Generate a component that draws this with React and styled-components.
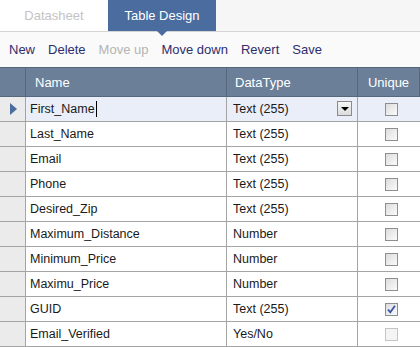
import styled, { createGlobalStyle } from 'styled-components'

const GlobalStyle = createGlobalStyle`
  html, body {
    margin: 0;
    padding: 0;
    background: #ffffff;
  }
  body {
    font-family: 'Liberation Sans', Arial, sans-serif;
  }
`

const fields = [
  { name: 'First_Name', type: 'Text (255)', selected: true },
  { name: 'Last_Name', type: 'Text (255)' },
  { name: 'Email', type: 'Text (255)' },
  { name: 'Phone', type: 'Text (255)' },
  { name: 'Desired_Zip', type: 'Text (255)' },
  { name: 'Maximum_Distance', type: 'Number' },
  { name: 'Minimum_Price', type: 'Number' },
  { name: 'Maximu_Price', type: 'Number' },
  { name: 'GUID', type: 'Text (255)', checked: true },
  { name: 'Email_Verified', type: 'Yes/No', disabled: true },
]

const actions = [
  { label: 'New' },
  { label: 'Delete' },
  { label: 'Move up', disabled: true },
  { label: 'Move down' },
  { label: 'Revert' },
  { label: 'Save' },
]

function App() {
  return (
    <>
      <GlobalStyle />
      <Page>
        <TabBar>
          <Tab>Datasheet</Tab>
          <Tab $active>Table Design</Tab>
        </TabBar>
        <Toolbar>
          {actions.map((a) => (
            <ToolButton key={a.label} $disabled={a.disabled}>
              {a.label}
            </ToolButton>
          ))}
        </Toolbar>
        <Grid>
          <HeadCell />
          <HeadCell $pad="9px">Name</HeadCell>
          <HeadCell $pad="8px">DataType</HeadCell>
          <HeadCell $center>Unique</HeadCell>
          {fields.map((f) => (
            <Row key={f.name} $selected={f.selected}>
              <RowHeader>{f.selected && <Pointer />}</RowHeader>
              <Cell>
                {f.name}
                {f.selected && <Caret />}
              </Cell>
              <Cell $pad="6px">
                {f.type}
                {f.selected && (
                  <DropButton>
                    <DropArrow />
                  </DropButton>
                )}
              </Cell>
              <Cell $center>
                <CheckBox $disabled={f.disabled}>
                  {f.checked && (
                    <svg width="11" height="11" viewBox="0 0 11 11">
                      <path
                        d="M2 5.5 L4.3 8.3 L9 1.8"
                        fill="none"
                        stroke="#3a55a8"
                        strokeWidth="1.8"
                      />
                    </svg>
                  )}
                </CheckBox>
              </Cell>
            </Row>
          ))}
        </Grid>
      </Page>
    </>
  )
}

const Page = styled.div`
  width: 420px;
  height: 347px;
  overflow: hidden;
  background: #ffffff;
`

const TabBar = styled.div`
  display: flex;
  height: 31px;
  background: #f6f6f6;
  border-bottom: 1px solid #d4d4d4;
`

const Tab = styled.div`
  position: relative;
  width: 108px;
  display: flex;
  align-items: center;
  justify-content: center;
  font-size: 13px;
  color: ${(p) => (p.$active ? '#ffffff' : '#c4c4c4')};
  background: ${(p) => (p.$active ? '#4a6c9f' : '#ffffff')};
  &::after {
    content: '';
    display: ${(p) => (p.$active ? 'block' : 'none')};
    position: absolute;
    left: 50%;
    bottom: -5px;
    margin-left: -5px;
    border-left: 5px solid transparent;
    border-right: 5px solid transparent;
    border-top: 5px solid #4a6c9f;
  }
`

const Toolbar = styled.div`
  display: flex;
  align-items: center;
  gap: 13px;
  height: 35px;
  padding: 0 9px;
  background: #fafafa;
`

const ToolButton = styled.span`
  font-size: 13px;
  color: ${(p) => (p.$disabled ? '#b4b4b4' : '#2e2e6e')};
`

const Grid = styled.div`
  display: grid;
  grid-template-columns: 26px 201px 131px 62px;
  grid-template-rows: 29px;
  grid-auto-rows: 25px;
  border-top: 1px solid #55667c;
`

const HeadCell = styled.div`
  display: flex;
  align-items: center;
  justify-content: ${(p) => (p.$center ? 'center' : 'flex-start')};
  padding-left: ${(p) => p.$pad || '0'};
  background: #6b7f99;
  color: #ffffff;
  font-size: 13px;
  border-right: 1px solid #56687e;
  border-bottom: 1px solid #56687e;
  &:last-child {
    border-right: none;
  }
`

const Row = styled.div`
  display: contents;
  & > div:not(:first-child) {
    background: ${(p) => (p.$selected ? '#e9eef8' : '#ffffff')};
  }
`

const Cell = styled.div`
  position: relative;
  display: flex;
  align-items: center;
  justify-content: ${(p) => (p.$center ? 'center' : 'flex-start')};
  padding-left: ${(p) => p.$pad || '4px'};
  font-size: 12.5px;
  color: #1a1a1a;
  border-right: 1px solid #a4a4a4;
  border-bottom: 1px solid #a4a4a4;
  &:last-child {
    border-right: none;
  }
`

const RowHeader = styled.div`
  display: flex;
  align-items: center;
  justify-content: center;
  background: #ebebeb;
  border-right: 1px solid #a4a4a4;
  border-bottom: 1px solid #a4a4a4;
`

const Pointer = styled.span`
  width: 0;
  height: 0;
  margin-left: 2px;
  border-top: 6px solid transparent;
  border-bottom: 6px solid transparent;
  border-left: 7px solid #4a6c9f;
`

const Caret = styled.span`
  display: inline-block;
  width: 1px;
  height: 16px;
  background: #000000;
  margin-left: 1px;
`

const DropButton = styled.span`
  position: absolute;
  right: 5px;
  top: 50%;
  margin-top: -8px;
  width: 15px;
  height: 15px;
  box-sizing: border-box;
  border: 1px solid #8a8a8a;
  background: linear-gradient(#f6f6f6, #dcdcdc);
  display: flex;
  align-items: center;
  justify-content: center;
`

const DropArrow = styled.span`
  width: 0;
  height: 0;
  margin-top: 1px;
  border-left: 4px solid transparent;
  border-right: 4px solid transparent;
  border-top: 4px solid #000000;
`

const CheckBox = styled.span`
  width: 13px;
  height: 13px;
  box-sizing: border-box;
  display: flex;
  align-items: center;
  justify-content: center;
  border: 1px solid ${(p) => (p.$disabled ? '#c4c4c4' : '#8e8e8e')};
  background: ${(p) =>
    p.$disabled ? '#f4f4f4' : 'linear-gradient(135deg, #dcdcdc, #fbfbfb)'};
`

export default App
